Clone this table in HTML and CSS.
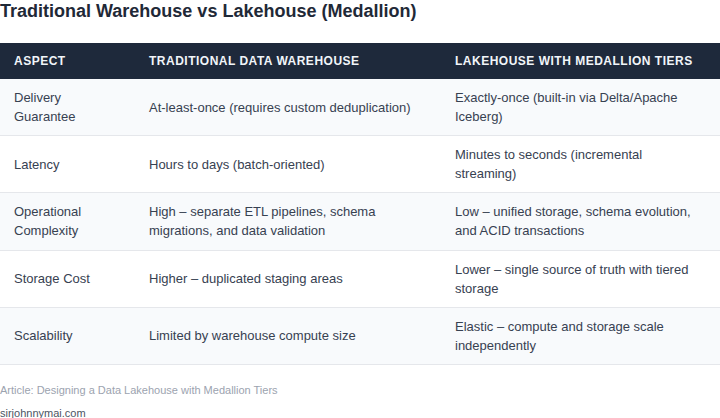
FILE: index.html
```html
<!DOCTYPE html>
<html>
<head>
<meta charset="utf-8">
<link rel="stylesheet" href="styles.css">
</head>
<body>
<h1 class="title">Traditional Warehouse vs Lakehouse (Medallion)</h1>
<table class="cmp">
  <thead>
    <tr><th class="c1">Aspect</th><th class="c2">Traditional Data Warehouse</th><th class="c3">Lakehouse with Medallion Tiers</th></tr>
  </thead>
  <tbody>
    <tr><td>Delivery Guarantee</td><td>At-least-once (requires custom deduplication)</td><td>Exactly-once (built-in via Delta/Apache Iceberg)</td></tr>
    <tr><td>Latency</td><td>Hours to days (batch-oriented)</td><td>Minutes to seconds (incremental streaming)</td></tr>
    <tr><td>Operational Complexity</td><td>High – separate ETL pipelines, schema migrations, and data validation</td><td>Low – unified storage, schema evolution, and ACID transactions</td></tr>
    <tr><td>Storage Cost</td><td>Higher – duplicated staging areas</td><td>Lower – single source of truth with tiered storage</td></tr>
    <tr><td>Scalability</td><td>Limited by warehouse compute size</td><td>Elastic – compute and storage scale independently</td></tr>
  </tbody>
</table>
<p class="source">Article: Designing a Data Lakehouse with Medallion Tiers</p>
<p class="site">sirjohnnymai.com</p>
</body>
</html>
```
FILE: styles.css
```css
html, body { margin: 0; padding: 0; background: #ffffff; }
body { font-family: "Liberation Sans", Arial, sans-serif; width: 720px; }
.title { margin: 0; font-size: 18px; line-height: 22px; font-weight: 700; color: #1f2937; }
.cmp { margin-top: 21px; width: 720px; border-collapse: collapse; }
.cmp th { background: #1e293b; color: #f1f5f9; font-size: 12px; font-weight: 700; text-transform: uppercase; letter-spacing: 0.5px; text-align: left; height: 36px; padding: 0 14px; box-sizing: border-box; }
.c1 { width: 135px; }
.c2 { width: 306px; }
.cmp td { font-size: 13px; line-height: 19px; color: #374151; padding: 9.1px 14px; border-bottom: 1px solid #e5e7eb; vertical-align: middle; height: 38px; }
.cmp tbody tr:nth-child(odd) td { background: #f8fafc; }
.source { margin: 18px 0 0; font-size: 11px; line-height: 14px; color: #9ca3af; }
.site { margin: 9px 0 0; font-size: 11px; line-height: 14px; color: #4b5563; }
```
